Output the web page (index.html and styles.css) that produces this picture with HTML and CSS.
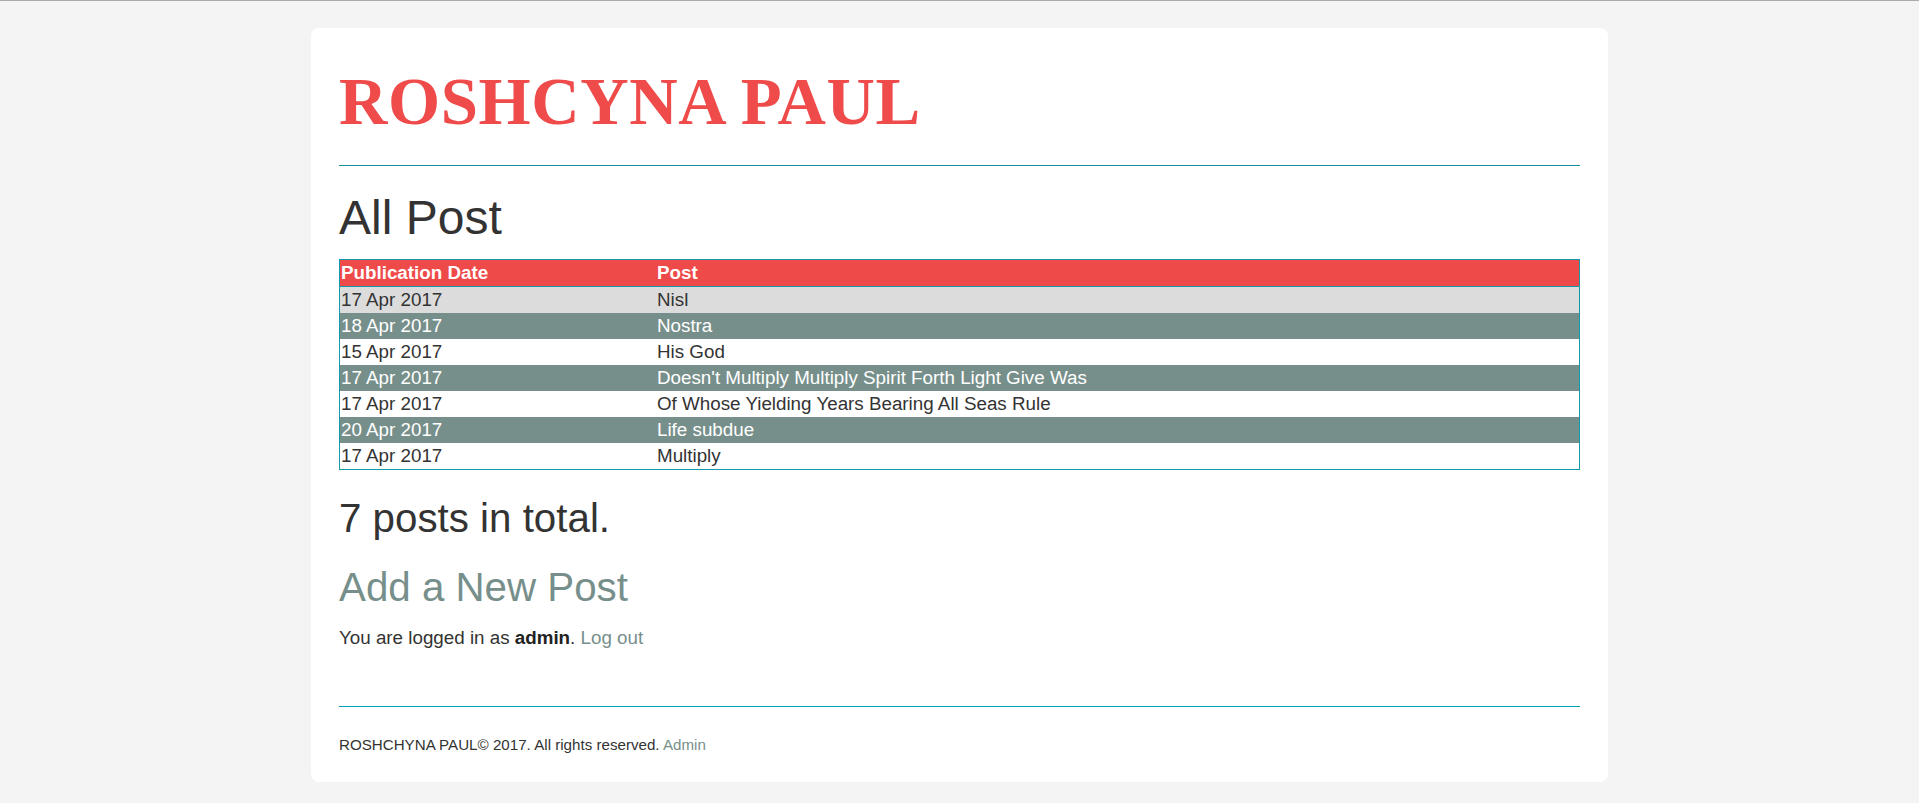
FILE: index.html
```html
<!DOCTYPE html>
<html lang="en">
<head>
<meta charset="utf-8">
<title>ROSHCYNA PAUL</title>
<link rel="stylesheet" href="styles.css">
</head>
<body>
<div class="card">
  <header class="site-header">
    <h1 class="site-title">ROSHCYNA PAUL</h1>
  </header>
  <hr class="rule">
  <main>
    <h2 class="page-title">All Post</h2>
    <table class="posts">
      <thead>
        <tr><th class="col-date">Publication Date</th><th>Post</th></tr>
      </thead>
      <tbody>
        <tr class="row-light"><td>17 Apr 2017</td><td>Nisl</td></tr>
        <tr class="row-dark"><td>18 Apr 2017</td><td>Nostra</td></tr>
        <tr><td>15 Apr 2017</td><td>His God</td></tr>
        <tr class="row-dark"><td>17 Apr 2017</td><td>Doesn't Multiply Multiply Spirit Forth Light Give Was</td></tr>
        <tr><td>17 Apr 2017</td><td>Of Whose Yielding Years Bearing All Seas Rule</td></tr>
        <tr class="row-dark"><td>20 Apr 2017</td><td>Life subdue</td></tr>
        <tr><td>17 Apr 2017</td><td>Multiply</td></tr>
      </tbody>
    </table>
    <h3 class="total">7 posts in total.</h3>
    <h3 class="add-post"><a href="#">Add a New Post</a></h3>
    <p class="login">You are logged in as <strong>admin</strong>. <a href="#">Log out</a></p>
  </main>
  <hr class="rule rule-footer">
  <footer class="site-footer">ROSHCHYNA PAUL© 2017. All rights reserved. <a href="#">Admin</a></footer>
</div>
</body>
</html>
```

FILE: styles.css
```css
html {
  border-top: 1px solid #ababab;
  background: #f4f4f4;
}
body {
  margin: 0;
  padding-top: 27px;
  font-family: "Liberation Sans", Arial, sans-serif;
  color: #333333;
  background: #f4f4f4;
}
a {
  color: #778f8b;
  text-decoration: none;
}
.card {
  width: 1297px;
  box-sizing: border-box;
  margin: 0 auto;
  background: #ffffff;
  border-radius: 8px;
  padding: 37px 28px 27px;
}
.site-title {
  margin: 0;
  font-family: "Liberation Serif", "Times New Roman", serif;
  font-weight: bold;
  font-size: 67px;
  line-height: 73px;
  letter-spacing: 0.6px;
  color: #ef4b4b;
}
.rule {
  margin: 27px 0 0;
  border: 0;
  border-top: 1px solid #17929e;
  height: 0;
}
.rule-footer {
  margin-top: 55px;
  border-top-color: #00a2b4;
}
.page-title {
  margin: 25px 0 0;
  font-weight: normal;
  font-size: 48px;
  line-height: 53px;
  color: #333333;
}
.posts {
  margin-top: 15px;
  width: 100%;
  border-collapse: separate;
  border-spacing: 0;
  border: 1px solid #1399a8;
  font-size: 18.8px;
  line-height: 24px;
}
.posts th,
.posts td {
  padding: 1px;
  text-align: left;
}
.posts th {
  background: #ef4a4a;
  color: #ffffff;
  font-weight: bold;
  border-bottom: 1px solid #1399a8;
}
.posts .col-date {
  width: 314px;
}
.row-light td {
  background: #dcdcdc;
}
.row-dark td {
  background: #778f8b;
  color: #ffffff;
}
.total {
  margin: 27px 0 0;
  font-weight: normal;
  font-size: 40.3px;
  line-height: 44px;
  color: #333333;
}
.add-post {
  margin: 25px 0 0;
  font-weight: normal;
  font-size: 40.3px;
  line-height: 44px;
}
.login {
  margin: 15px 0 0;
  font-size: 18.8px;
  line-height: 26px;
}
.login strong {
  color: #222222;
}
.site-footer {
  margin-top: 27px;
  font-size: 15.15px;
  line-height: 21px;
  color: #333333;
}
```
